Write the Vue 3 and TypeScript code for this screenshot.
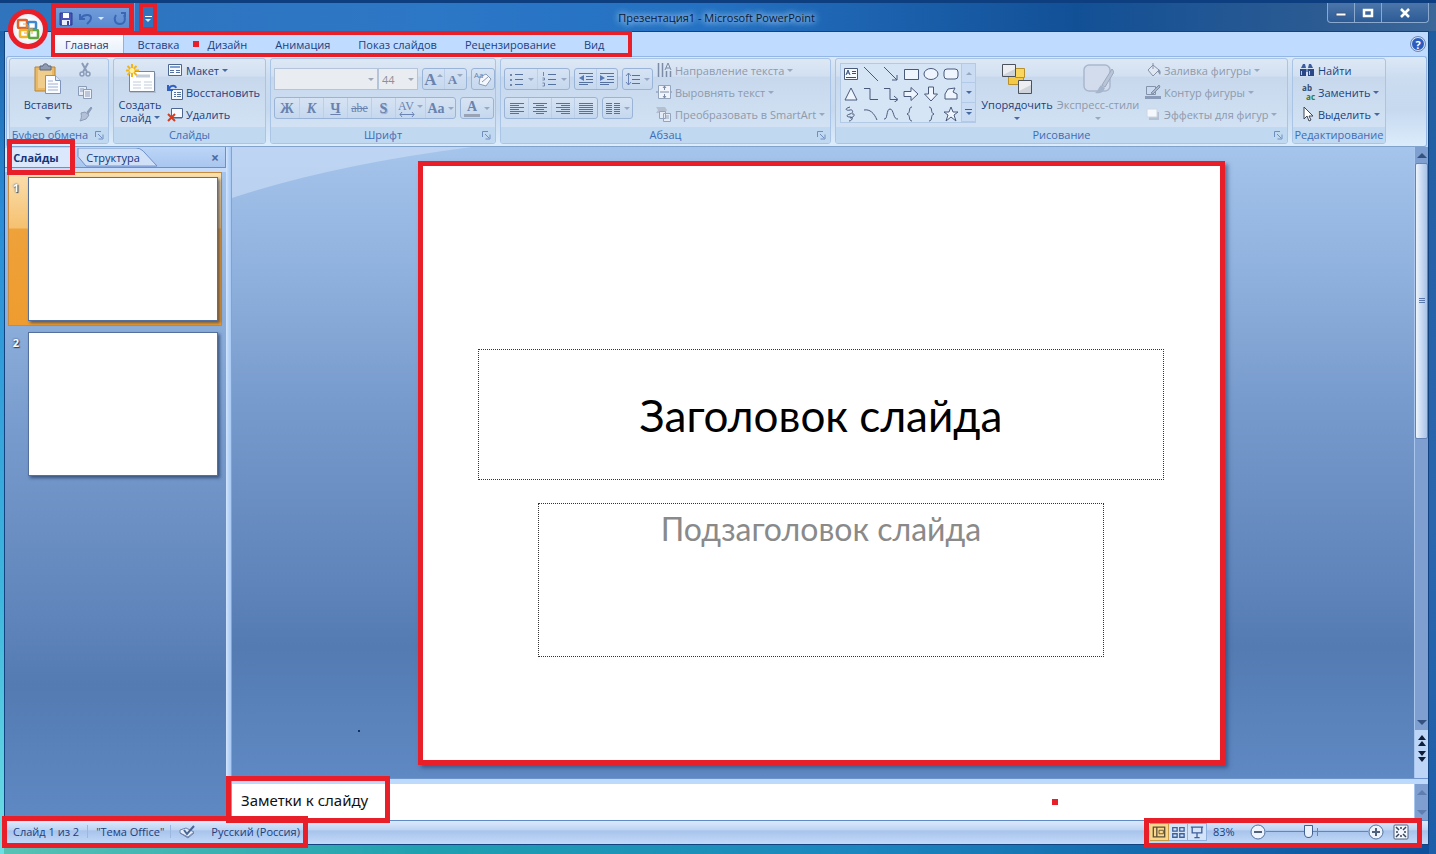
<script setup lang="ts">
import { ref } from 'vue'

const tabs = ['Главная', 'Вставка', 'Дизайн', 'Анимация', 'Показ слайдов', 'Рецензирование', 'Вид']
const activeTab = ref('Главная')
const activeSlide = ref(1)
const slides = [1, 2]
const zoom = ref(41)
const notes = ref('Заметки к слайду')

const g = '#8b9cb8'
const n = '#3d5f9a'
const lines = (rows: number[][], c = '#55719f') =>
  rows.map(([x, y, w]) => `<path d="M${x} ${y}.5h${w}" stroke="${c}"/>`).join('')

const icons: Record<string, string> = {
  save: '<path d="M2 2h12v12H2z" fill="#4a55b5" stroke="#2b3a90"/><path d="M5 2h6v5H5z" fill="#fff"/><path d="M4 9h8v5H4z" fill="#e8eefb"/><path d="M9 10h2v4H9z" fill="#3a46a0"/>',
  undo: '<path d="M2 3v5h5M3 7c3-4 10-4 10 0 0 3-2 4-4 6" fill="none" stroke="#3c66b5" stroke-width="2"/>',
  redo: '<path d="M9 2h4v4M4 4c-2 3-2 9 4 9 5 0 6-5 4-9" fill="none" stroke="#3c66b5" stroke-width="2"/>',
  cut: `<path d="M5 1l5 9M11 1L6 10" stroke="${g}" stroke-width="2"/><circle cx="5" cy="12" r="2" fill="none" stroke="${g}" stroke-width="1.5"/><circle cx="11" cy="12" r="2" fill="none" stroke="${g}" stroke-width="1.5"/>`,
  copy: `<path d="M1.500 2.500h8v9h-8z" fill="#e4ebf6" stroke="${g}"/><path d="M6.500 5.500h8v9h-8z" fill="#eef3fa" stroke="${g}"/><path d="M3 5h4M3 7h3M8 8h5M8 10h5M8 12h5" stroke="${g}"/>`,
  brush: `<path d="M10 6l4-5 1 1-4 6z" fill="${g}" stroke="${g}"/><path d="M4 7l4-1 4 3-3 4-6 2c1-2 2-4 1-8z" fill="#b3c0d6" stroke="${g}"/>`,
  layout: `<path d="M1.500 2.500h13v11h-13z" fill="#f5f9ff" stroke="#4d6790"/><path d="M3 4h10v2H3z" fill="#7fa0d0"/>` + lines([[3, 8, 4], [3, 10, 4], [9, 8, 4], [9, 10, 4]]),
  reset: `<path d="M4.500 5.500h11v10h-11z" fill="#f5f9ff" stroke="#4d6790"/>` + lines([[7, 8, 2], [10, 8, 4], [7, 10, 2], [10, 10, 4], [7, 12, 2], [10, 12, 4]]) + '<path d="M1 1v5h5M2 5c1-4 6-4 7-1" fill="none" stroke="#2f5fc0" stroke-width="2"/>',
  remove: '<path d="M4.500 2.500h11v9h-11z" fill="#f5f9ff" stroke="#4d6790"/><path d="M7 12h8" stroke="#4d6790"/><path d="M1 8l7 7M8 8l-7 7" stroke="#d93a1c" stroke-width="2"/>',
  paste: '<path d="M3 4h20v24H3z" fill="#e9b864" stroke="#b98436"/><path d="M6 7h14v18H6z" fill="#f1cd8b"/><path d="M8 3h3c0-3 5-3 5 0h3v4H8z" fill="#8f9bb0" stroke="#5c6880"/><path d="M13.500 12.500h10l5 5v13h-15z" fill="#fafcff" stroke="#7e94bb"/><path d="M23.500 12.500v5h5" fill="#dbe5f5" stroke="#7e94bb"/><path d="M16 18h5M16 21h10M16 24h10M16 27h10" stroke="#9db0d0"/>',
  newSlide: '<path d="M5.500 8.500h25v20h-25z" fill="#fdfeff" stroke="#76879f"/><path d="M6 29.500h26V10" fill="none" stroke="#b3bfd0"/><path d="M12 13h14" stroke="#c3ccda" stroke-width="3"/><path d="M9 19h8M9 22h8M9 25h8M20 19h8M20 22h8M20 25h8" stroke="#c3ccda"/><path d="M8 1v13M2 7.500h13M3.500 3l9 9M12.500 3l-9 9" stroke="#eeb51c" stroke-width="2"/><circle cx="8" cy="7.500" r="2.500" fill="#fff3a8"/>',
  bullets: '<path d="M2 3h2v2H2zM2 8h2v2H2zM2 13h2v2H2z" fill="#7187ae"/>' + lines([[7, 3, 8], [7, 8, 8], [7, 13, 8]]),
  numbers: '<path d="M2.500 1v4M1.500 7h2v2h-2M1.500 12h2v3h-2" fill="none" stroke="#7187ae"/>' + lines([[7, 3, 8], [7, 8, 8], [7, 13, 8]]),
  outdent: lines([[1, 2, 14], [8, 5, 7], [8, 8, 7], [1, 11, 14], [1, 13, 9]]) + '<path d="M6 4v6L1 7z" fill="#5678b5"/>',
  indent: lines([[1, 2, 14], [8, 5, 7], [8, 8, 7], [1, 11, 14], [1, 13, 9]]) + '<path d="M1 4v6l5-3z" fill="#5678b5"/>',
  spacing: lines([[7, 4, 8], [7, 8, 8], [7, 12, 8]]) + '<path d="M3.500 2v12M1 5l2.500-3L6 5M1 11l2.500 3L6 11" fill="none" stroke="#6a85b5"/>',
  left: lines([[1, 3, 14], [1, 5, 9], [1, 7, 14], [1, 9, 9], [1, 11, 14], [1, 13, 9]]),
  center: lines([[1, 3, 14], [4, 5, 8], [1, 7, 14], [4, 9, 8], [1, 11, 14], [4, 13, 8]]),
  right: lines([[1, 3, 14], [6, 5, 9], [1, 7, 14], [6, 9, 9], [1, 11, 14], [6, 13, 9]]),
  justify: lines([[1, 3, 14], [1, 5, 14], [1, 7, 14], [1, 9, 14], [1, 11, 14], [1, 13, 14]]),
  columns: lines([[1, 3, 6], [1, 5, 6], [1, 7, 6], [1, 9, 6], [1, 11, 6], [1, 13, 6], [9, 3, 6], [9, 5, 6], [9, 7, 6], [9, 9, 6], [9, 11, 6], [9, 13, 6]]),
  direction: '<path d="M2.500 1v14M6.500 1v14M10.500 9v6M14.500 9v6" stroke="#7b8ba6" stroke-width="1.500"/><path d="M9 8l3-7 3 7M10 6h4" fill="none" stroke="#7b8ba6"/>',
  vertical: '<path d="M2.500 1.500h12v13h-12z" fill="#f1f5fb" stroke="#94a4bd"/><path d="M8.500 2v4M8.500 10v4M7 4l1.500-2L10 4M7 12l1.500 2 1.500-2M4 8h9" stroke="#7b8ba6" fill="none"/><path d="M0 8h2M15 8h1" stroke="#7b8ba6"/>',
  smart: '<path d="M0 1h9l2 3-2 3H0l2-3z" fill="#b4bfd0"/><path d="M3.500 5.500h6v7h-6zM7.500 7.500h7v8h-7z" fill="#e6ecf5" stroke="#94a4bd"/><path d="M9 10h4M9 12h4" stroke="#94a4bd"/>',
  clear: '<path d="M7 8l6-3 5 5-5 7-7-2z" fill="#f4f7fc" stroke="#8a9bb8"/><path d="M9 13l6-5" stroke="#8a9bb8"/>',
  arrange: '<path d="M7.500 9.500h15v12h-15z" fill="#f5c945" stroke="#b9912a"/><path d="M14.500 5.500h9v9h-9z" fill="#f9d65e" stroke="#b9912a"/><path d="M1.500 1.500h13v12h-13z" fill="#cfd3da" stroke="#4c525c"/><path d="M17.500 17.500h13v13h-13z" fill="#cfd3da" stroke="#4c525c"/><path d="M2 2h12v4L2 12zM18 18h12v4l-12 6z" fill="#eceef2"/>',
  styles: '<rect x="2" y="2" width="26" height="26" rx="5" fill="#d3dced" stroke="#a9b7ce" stroke-width="1.500"/><path d="M30 6L20 22l3 2L32 9z" fill="#b9c4d6" stroke="#9aa9c0"/><path d="M19 22l4 3c-2 5-6 6-10 5 3-2 3-5 6-8z" fill="#a7b5cc"/>',
  fill: '<path d="M3 8l5-5 6 5-6 6z" fill="#e1e7f0" stroke="#8493ab"/><path d="M8 1v6" stroke="#8493ab"/><path d="M13 7c3 1 3 4 2 6l-2-3z" fill="#8493ab"/>',
  outline: '<path d="M1.500 2.500h9v8h-9z" fill="none" stroke="#8493ab"/><path d="M6 9l8-8 1 2-7 7z" fill="#aab6c9" stroke="#7d8da8"/><path d="M0 12h16v3H0z" fill="#8a9bb9"/>',
  effects: '<path d="M4 6h10v8H4z" fill="#b5c0d2"/><path d="M2 3h10v8H2z" fill="#f4f7fb" stroke="#cdd6e3"/>',
  find: '<path d="M2 6l2-4h2l1 4zM9 6l1-4h2l2 4z" fill="#3d5c9c"/><path d="M1 7h6v7H1zM9 7h6v7H9z" fill="#2b4786"/><path d="M7 7h2v3H7z" fill="#6c88c0"/><path d="M2.500 9v4M10.500 9v4" stroke="#b9cbee"/>',
  select: '<path d="M5 1v12l3-3 2 5 2-1-2-4h4z" fill="#fff" stroke="#3c4658"/>',
  spell: '<path d="M1 6l6-2 8 4-6 5-8-4z" fill="#e5edf8" stroke="#6c84ad"/><path d="M1 9l8 5 6-5" fill="none" stroke="#6c84ad"/><path d="M5 6l3 4 7-8" fill="none" stroke="#4a6596" stroke-width="2"/>',
  normal: '<path d="M1.500 2.500h13v11h-13zM5.500 3v10" fill="none" stroke="#5b5034" stroke-width="1.500"/><path d="M8 6h5v4H8z" fill="none" stroke="#5b5034"/>',
  sorter: `<path d="M2 3h5v4H2zM10 3h5v4h-5zM2 10h5v4H2zM10 10h5v4h-5z" fill="none" stroke="${n}" stroke-width="1.500"/>`,
  show: `<path d="M1 2.500h14M2.500 3v6h11V3M8 9v5M5 14.500h6" fill="none" stroke="${n}" stroke-width="1.500"/>`,
  fit: '<rect x="1" y="1" width="14" height="14" rx="1" fill="#f4f8fe" stroke="#50617c"/><path d="M3 3l3 3M13 3l-3 3M3 13l3-3M13 13l-3-3M8 3v2M8 11v2M3 8h2M11 8h2" stroke="#34445f" stroke-width="1.500"/>',
  launcher: '<path d="M1.500 7V1.500H7M9 4.500V9H4.500M4 4l4 4" fill="none" stroke="#6f8fbf"/>',
}

const s = (d: string, fill = 'none') => `<path d="${d}" fill="${fill}" stroke="#48597a"/>`
const shapes = [
  s('M1.500 2.500h13v11h-13z', '#f7faff') + '<path d="M3 9l2-5 2 5M4 7h2M9 5.500h4M9 7.500h4M3 11.500h10" fill="none" stroke="#35507f"/>',
  s('M1 1l14 14'),
  s('M1 1l13 13M14 9v5H9'),
  s('M1.500 3.500h14v10h-14z', '#eef5ff'),
  '<ellipse cx="8" cy="8" rx="7" ry="5.500" fill="#eef5ff" stroke="#48597a"/>',
  '<rect x="1" y="3" width="14" height="10" rx="3" fill="#eef5ff" stroke="#48597a"/>',
  s('M8 2l6 12H2z', '#eef5ff'),
  s('M1 2.500h6v11h8'),
  s('M1 2.500h6v11h7M11 10l4 3.500-4 3'),
  s('M1 5.500h7v-4l7 6.500-7 6.500v-4H1z', '#eef5ff'),
  s('M5.500 1h5v7h4L8 15 1.500 8h4z', '#eef5ff'),
  s('M2 13V8l3-5 7-1-2 4 4 2v5z', '#eef5ff'),
  s('M7 1c-7 2-3 4 0 3s4 3 0 4-4 3 0 3 2 4-1 4M9 8c4-1 2 4-2 4'),
  s('M1 4c6-1 10 3 13 10'),
  s('M1 13C5 14 3 3 7 3s3 11 8 10'),
  s('M9 1C5 1 8 7 4 8c4 1 1 7 5 7'),
  s('M6 1c4 0 1 6 5 7-4 1-1 7-5 7'),
  s('M8 1l2 5h5l-4 3 2 6-5-4-5 4 2-6-4-3h5z', '#eef5ff'),
]
</script>

<template>
  <div class="window">
    <header class="titlebar">
      <div class="qat">
        <button aria-label="Сохранить"><svg class="i16" viewBox="0 0 16 16" v-html="icons.save" /></button>
        <button aria-label="Отменить"><svg class="i16" viewBox="0 0 16 16" v-html="icons.undo" /></button>
        <i class="caret light" />
        <button class="redo" aria-label="Вернуть"><svg class="i16" viewBox="0 0 16 16" v-html="icons.redo" /></button>
        <span class="mark" />
      </div>
      <button class="customize" aria-label="Настройка панели"><i class="bar" /><i class="caret light" /><span class="mark" /></button>
      <div class="title">Презентация1 - Microsoft PowerPoint</div>
      <div class="winbtns">
        <button aria-label="Свернуть"><svg width="12" height="10" viewBox="0 0 12 10"><path d="M1 5h10v3H1z" fill="#fff" stroke="#44597c" /></svg></button>
        <button aria-label="Развернуть"><svg width="12" height="10" viewBox="0 0 12 10"><path d="M2 2h8v6H2z" fill="none" stroke="#fff" stroke-width="2.500" /></svg></button>
        <button class="close" aria-label="Закрыть"><svg width="12" height="10" viewBox="0 0 12 10"><path d="M2 1l8 8M10 1L2 9" stroke="#fff" stroke-width="2.500" /></svg></button>
      </div>
      <button class="office" aria-label="Office">
        <svg width="26" height="26" viewBox="0 0 26 26" fill="none" stroke-width="2.500">
          <rect x="3" y="4" width="9" height="8" rx="1" stroke="#e2622a" />
          <rect x="13" y="6" width="8" height="7" rx="1" stroke="#3e86d0" />
          <rect x="5" y="14" width="8" height="7" rx="1" stroke="#efb52c" />
          <rect x="14" y="14" width="9" height="8" rx="1" stroke="#5fa83a" />
          <path d="M8 8h4v4M14 9v4h4M9 17h4v-4M17 18v-4h-3" stroke="#f0a340" stroke-width="1" />
        </svg>
      </button>
    </header>

    <div class="client">
      <nav class="tabs">
        <div class="tablist">
          <button v-for="t in tabs" :key="t" :class="{ active: t === activeTab }" @click="activeTab = t">{{ t }}</button>
          <span class="mark" />
          <span class="dot" />
        </div>
        <button class="help" aria-label="Справка">?</button>
      </nav>

      <div class="ribbon">
        <section class="group clip">
          <div class="body">
            <button class="big"><svg class="i32" viewBox="0 0 32 32" v-html="icons.paste" /><span>Вставить</span><i class="caret" /></button>
            <div class="col">
              <button v-for="k in ['cut', 'copy', 'brush']" :key="k" class="row" :aria-label="k"><svg class="i16" viewBox="0 0 16 16" v-html="icons[k]" /></button>
            </div>
          </div>
          <footer>Буфер обмена<svg class="launch" viewBox="0 0 10 10" v-html="icons.launcher" /></footer>
        </section>

        <section class="group slidesg">
          <div class="body">
            <button class="big"><svg class="i32" viewBox="0 0 32 32" v-html="icons.newSlide" /><span>Создать</span><span class="inline">слайд<i class="caret" /></span></button>
            <div class="col">
              <button class="row"><svg class="i16" viewBox="0 0 16 16" v-html="icons.layout" />Макет<i class="caret" /></button>
              <button class="row"><svg class="i16" viewBox="0 0 16 16" v-html="icons.reset" />Восстановить</button>
              <button class="row"><svg class="i16" viewBox="0 0 16 16" v-html="icons.remove" />Удалить</button>
            </div>
          </div>
          <footer>Слайды</footer>
        </section>

        <section class="group fontg">
          <div class="body rows">
            <div class="line">
              <div class="combo">
                <label class="sel name"><select aria-label="Шрифт" disabled><option></option></select><i class="caret" /></label>
                <label class="sel size"><select aria-label="Размер" disabled><option>44</option></select><i class="caret" /></label>
              </div>
              <div class="box grow">
                <button aria-label="Увеличить"><b class="serif lg">A</b><i class="caret up dim" /></button>
                <button aria-label="Уменьшить"><b class="serif">A</b><i class="caret raised dim" /></button>
              </div>
              <div class="box one"><button aria-label="Очистить"><span class="tiny">Aa</span><svg class="i20" viewBox="0 0 20 20" v-html="icons.clear" /></button></div>
            </div>
            <div class="line">
              <div class="box">
                <button class="w24 serif b">Ж</button>
                <button class="w24 serif b it">К</button>
                <button class="w24 serif b un">Ч</button>
                <button class="w24 serif st">abe</button>
                <button class="w24 serif b sh">S</button>
                <button class="w30 serif av"><span>AV</span><svg width="16" height="5" viewBox="0 0 16 5"><path d="M1 2.500h14M3 0L1 2.500 3 5M13 0l2 2.500L13 5" fill="none" stroke="#6a85b5" /></svg><i class="caret dim" /></button>
                <button class="w30 serif b">Aa<i class="caret dim" /></button>
              </div>
              <div class="box"><button class="w32 serif b"><span class="fc">A</span><i class="caret dim" /></button></div>
            </div>
          </div>
          <footer>Шрифт<svg class="launch" viewBox="0 0 10 10" v-html="icons.launcher" /></footer>
        </section>

        <section class="group parag">
          <div class="body">
            <div class="rows">
              <div class="line">
                <div class="box">
                  <button class="w32" aria-label="Маркеры"><svg class="i16" viewBox="0 0 16 16" v-html="icons.bullets" /><i class="caret dim" /></button>
                  <button class="w32" aria-label="Нумерация"><svg class="i16" viewBox="0 0 16 16" v-html="icons.numbers" /><i class="caret dim" /></button>
                </div>
                <div class="box">
                  <button v-for="k in ['outdent', 'indent']" :key="k" class="w22" :aria-label="k"><svg class="i16" viewBox="0 0 16 16" v-html="icons[k]" /></button>
                </div>
                <div class="box"><button class="w28" aria-label="Интервал"><svg class="i16" viewBox="0 0 16 16" v-html="icons.spacing" /><i class="caret dim" /></button></div>
              </div>
              <div class="line">
                <div class="box">
                  <button v-for="k in ['left', 'center', 'right', 'justify']" :key="k" class="w23" :aria-label="k"><svg class="i16" viewBox="0 0 16 16" v-html="icons[k]" /></button>
                </div>
                <div class="box"><button class="w28" aria-label="Колонки"><svg class="i16" viewBox="0 0 16 16" v-html="icons.columns" /><i class="caret dim" /></button></div>
              </div>
            </div>
            <div class="col off">
              <button class="row"><svg class="i16" viewBox="0 0 16 16" v-html="icons.direction" />Направление текста<i class="caret dim" /></button>
              <button class="row"><svg class="i16" viewBox="0 0 16 16" v-html="icons.vertical" />Выровнять текст<i class="caret dim" /></button>
              <button class="row"><svg class="i16" viewBox="0 0 16 16" v-html="icons.smart" />Преобразовать в SmartArt<i class="caret dim" /></button>
            </div>
          </div>
          <footer>Абзац<svg class="launch" viewBox="0 0 10 10" v-html="icons.launcher" /></footer>
        </section>

        <section class="group drawg">
          <div class="body">
            <div class="gallery">
              <div class="shapes">
                <button v-for="(d, i) in shapes" :key="i" :aria-label="'Фигура ' + (i + 1)"><svg class="i16" viewBox="0 0 16 16" v-html="d" /></button>
              </div>
              <div class="gscroll">
                <button aria-label="Вверх"><i class="caret flip dim" /></button>
                <button aria-label="Вниз"><i class="caret" /></button>
                <button aria-label="Ещё"><i class="bar dark" /><i class="caret" /></button>
              </div>
            </div>
            <button class="big arr"><svg class="i32" viewBox="0 0 32 32" v-html="icons.arrange" /><span>Упорядочить</span><i class="caret" /></button>
            <button class="big off exp"><svg class="i32" viewBox="0 0 32 32" v-html="icons.styles" /><span>Экспресс-стили</span><i class="caret dim" /></button>
            <div class="col off">
              <button class="row"><svg class="i16" viewBox="0 0 16 16" v-html="icons.fill" />Заливка фигуры<i class="caret dim" /></button>
              <button class="row"><svg class="i16" viewBox="0 0 16 16" v-html="icons.outline" />Контур фигуры<i class="caret dim" /></button>
              <button class="row"><svg class="i16" viewBox="0 0 16 16" v-html="icons.effects" />Эффекты для фигур<i class="caret dim" /></button>
            </div>
          </div>
          <footer>Рисование<svg class="launch" viewBox="0 0 10 10" v-html="icons.launcher" /></footer>
        </section>

        <section class="group editg">
          <div class="body">
            <div class="col">
              <button class="row"><svg class="i16" viewBox="0 0 16 16" v-html="icons.find" />Найти</button>
              <button class="row"><span class="abac"><b>ab</b><b class="ac">ac</b></span>Заменить<i class="caret" /></button>
              <button class="row"><svg class="i16" viewBox="0 0 16 16" v-html="icons.select" />Выделить<i class="caret" /></button>
            </div>
          </div>
          <footer>Редактирование</footer>
        </section>
      </div>

      <main class="work">
        <aside class="pane">
          <div class="ptabs">
            <button class="ptab on">Слайды<span class="mark" /></button>
            <button class="ptab two">
              <svg class="slant" viewBox="0 0 82 20" preserveAspectRatio="none"><path d="M1 0v9l8 10h71L66 3q-3-3-7-3z" fill="#cfe0f7" stroke="#6d8fc4" /></svg>
              <span>Структура</span>
            </button>
            <button class="pclose" aria-label="Закрыть панель">×</button>
          </div>
          <div class="list">
            <button v-for="k in slides" :key="k" class="item" :class="{ sel: k === activeSlide }" @click="activeSlide = k">
              <span class="num">{{ k }}</span><span class="thumb" />
            </button>
          </div>
        </aside>
        <div class="split" />
        <div class="right">
          <div class="stagerow">
            <div class="stage">
              <svg class="sheen" viewBox="0 0 240 51" preserveAspectRatio="none"><path d="M0 0h240Q100 18 0 51z" fill="#cfdff6" fill-opacity=".6" /></svg>
              <article class="slide">
                <div class="ph head"><h1>Заголовок слайда</h1></div>
                <div class="ph sub"><p>Подзаголовок слайда</p></div>
              </article>
              <span class="speck" />
            </div>
            <div class="vscroll">
              <button aria-label="Вверх"><i class="tri up" /></button>
              <div class="track"><div class="grab"><i /><i /><i /></div></div>
              <button aria-label="Вниз"><i class="tri" /></button>
              <div class="pager">
                <button aria-label="Предыдущий слайд"><i class="tri up dk" /><i class="tri up dk" /></button>
                <button aria-label="Следующий слайд"><i class="tri dk" /><i class="tri dk" /></button>
              </div>
            </div>
          </div>
          <div class="notes">
            <textarea v-model="notes" aria-label="Заметки" spellcheck="false" />
            <div class="vscroll"><button aria-label="Вверх"><i class="tri up faint" /></button><button aria-label="Вниз"><i class="tri faint" /></button></div>
            <span class="mark" />
            <span class="dot" />
          </div>
        </div>
      </main>

      <footer class="status">
        <div class="sleft">
          <span class="s1">Слайд 1 из 2</span>
          <span class="s2">"Тема Office"</span>
          <span class="s3"><svg class="i16" viewBox="0 0 16 16" v-html="icons.spell" /></span>
          <span>Русский (Россия)</span>
          <span class="mark" />
        </div>
        <div class="sright">
          <div class="views">
            <button v-for="k in ['normal', 'sorter', 'show']" :key="k" :class="{ on: k === 'normal' }" :aria-label="k"><svg width="14" height="14" viewBox="0 0 16 16" v-html="icons[k]" /></button>
          </div>
          <span class="pct">83%</span>
          <button class="round" aria-label="Уменьшить масштаб"><svg width="16" height="16" viewBox="0 0 16 16"><circle cx="8" cy="8" r="7" fill="#eef4fd" stroke="#51719f" /><path d="M4 8h8" stroke="#51607c" stroke-width="2" /></svg></button>
          <input v-model="zoom" type="range" min="0" max="100" aria-label="Масштаб">
          <button class="round" aria-label="Увеличить масштаб"><svg width="16" height="16" viewBox="0 0 16 16"><circle cx="8" cy="8" r="7" fill="#eef4fd" stroke="#51719f" /><path d="M4 8h8M8 4v8" stroke="#51607c" stroke-width="2" /></svg></button>
          <button class="round fit" aria-label="Вписать"><svg width="16" height="16" viewBox="0 0 16 16" v-html="icons.fit" /></button>
          <span class="mark" />
        </div>
      </footer>
    </div>
  </div>
</template>

<style>
body { margin: 0; }
</style>

<style scoped>
* { box-sizing: border-box; }
button { font: inherit; color: inherit; background: none; border: 0; padding: 0; margin: 0; display: flex; align-items: center; justify-content: center; white-space: nowrap; }
.window {
  height: 100vh; min-height: 600px; display: flex; flex-direction: column; overflow: hidden;
  font: 11px/13px "Open Sans", "Noto Sans", sans-serif; color: #1c3f7e;
  padding: 0 7px 9px 4px;
  background:
    linear-gradient(#0d3f80 0, #0d3f80 3px, transparent 3px),
    linear-gradient(90deg, #2f74bd 0, #2c77c6 30%, #2470c2 50%, #125096 75%, #2c5b92 92%, #3c6799 100%) 0 0 / 100% 31px no-repeat,
    linear-gradient(#1f5c9f, #2b66ad 60%, #1d5ea8) 100% 0 / 7px 100% no-repeat,
    linear-gradient(#1d5ea5, #2a8dd6 25%, #3fb6dd 70%, #6fe0e4) 0 0 / 4px 100% no-repeat,
    linear-gradient(90deg, #58c2b4 0, #1fa0b0 30%, #1b86bf 60%, #0d4f9c 100%) 0 100% / 100% 9px no-repeat;
}
.mark { position: absolute; border: 5px solid #e81e29; pointer-events: none; z-index: 5; }
.dot { position: absolute; width: 6px; height: 6px; background: #e81e29; pointer-events: none; z-index: 5; }
.i16 { width: 16px; height: 16px; flex: none; }
.i20 { width: 20px; height: 20px; flex: none; }
.i32 { width: 32px; height: 32px; flex: none; }

.titlebar { position: relative; height: 31px; flex: none; display: flex; align-items: center; z-index: 3; padding: 3px 0 0 47px; }
.qat { position: relative; display: flex; align-items: center; height: 28px; width: 84px; padding: 3px 0 0 7px; gap: 4px; background: linear-gradient(#78a0dc, #5588cf); }
.qat .redo { margin-left: 4px; }
.qat .mark { inset: 0 1px -2px 0; }
.customize { position: relative; flex-direction: column; gap: 2px; width: 18px; height: 28px; margin-left: 4px; padding-top: 3px; background: #2f74bd; }
.customize .mark { inset: 0; border-width: 4px; }
.bar { width: 7px; height: 1px; background: #fff; }
.bar.dark { background: #3d5f9a; }
.title { position: absolute; left: 0; right: 0; padding-top: 2px; text-align: center; font-size: 11px; line-height: 16px; color: #0a1a33; text-shadow: 0 0 6px #a9cdf5, 0 0 6px #a9cdf5, 0 0 10px #8fbdf0; pointer-events: none; }
.winbtns { margin-left: auto; align-self: flex-start; display: flex; height: 20px; border: 1px solid #8ba9cf; border-top: 0; border-radius: 0 0 4px 4px; background: linear-gradient(#4c76ab, #2d5b96); }
.winbtns button { width: 27px; border-right: 1px solid #8ba9cf; }
.winbtns .close { width: 46px; border: 0; }
.office { position: absolute; left: 4px; top: 9px; width: 40px; height: 40px; border-radius: 50%; border: 5px solid #e81e29; background: radial-gradient(#fff 40%, #d5dfee); }

.client { flex: 1; min-height: 0; display: flex; flex-direction: column; border: 1px solid #10437f; background: #bfdbff; }
.tabs { flex: none; height: 24px; display: flex; justify-content: space-between; align-items: center; padding: 0 3px 0 46px; }
.tablist { position: relative; display: flex; height: 100%; }
.tablist button { padding: 0 14px; }
.tablist button:last-of-type { padding-right: 28px; }
.tablist .active { background: linear-gradient(#fff, #e4eefb); border-right: 1px solid #8fb1e0; }
.tablist .mark { inset: -1px 0 -1px 0; border-width: 4px; }
.tablist .dot { left: 142px; top: 9px; }
.help { width: 14px; height: 14px; border-radius: 50%; background: #2d5cc0; border: 1px solid #dbe8fa; outline: 1px solid #6d86b2; color: #fff; font-weight: 700; line-height: 11px; }

.ribbon { flex: none; display: flex; gap: 4px; height: 91px; margin: 0 1px; padding: 1px 2px 2px; overflow: hidden; border: 1px solid #94b6e4; border-bottom-color: #7fa3cb; border-radius: 3px; background: linear-gradient(#dce8f6, #cbdcf0 25%, #c6d9ef 60%, #dcecfc); }
.group { flex: none; display: flex; flex-direction: column; height: 86px; border: 1px solid #a9c4e4; border-radius: 3px; background: linear-gradient(#dde8f5, #d2e0f1 20%, #c7d8ed 22%, #d5e5f6); overflow: hidden; }
.clip { width: 100px; } .slidesg { width: 153px; } .fontg { width: 226px; } .parag { width: 331px; } .drawg { width: 453px; } .editg { width: 94px; }
.group .body { flex: 1; display: flex; }
.group footer { position: relative; flex: none; height: 16px; line-height: 15px; text-align: center; color: #3e6db5; background: #c1d8f1; white-space: nowrap; }
.launch { position: absolute; right: 4px; top: 3px; width: 10px; height: 10px; }
.clip footer { padding-right: 18px; }
.col { display: flex; flex-direction: column; }
.row { height: 22px; justify-content: flex-start; gap: 3px; }
.off { color: #8e99ab; }
.big { flex-direction: column; justify-content: flex-start; padding-top: 4px; height: 66px; }
.big span { line-height: 13px; }
.big > .caret { margin-top: 6px; }
.big .i32 { margin-bottom: 3px; }
.inline { display: flex; align-items: center; gap: 3px; }
.clip .big { width: 58px; margin-left: 9px; }
.slidesg .big { width: 48px; margin: 0 3px 0 2px; }
.caret { flex: none; width: 0; height: 0; border: 3px solid transparent; border-top-color: #4668a3; border-bottom: 0; }
.caret.light { border-top-color: #dbe8fa; }
.caret.dim { border-top-color: #98a8c2; }
.caret.up { transform: rotate(180deg); margin: 0 0 8px; }
.caret.raised { margin-bottom: 8px; }
.caret.flip { transform: rotate(180deg); }

.rows { display: flex; flex-direction: column; gap: 7px; padding: 9px 0 0 3px; }
.group .body.rows { flex-direction: column; }
.line { display: flex; gap: 4px; height: 22px; }
.combo { display: flex; width: 144px; }
.sel { position: relative; display: flex; align-items: center; }
.sel select { width: 100%; height: 22px; appearance: none; border: 1px solid #b4c4da; background: #e9edf2; color: #8b919b; font: inherit; padding: 0 3px; opacity: 1; border-radius: 0; }
.sel .caret { position: absolute; right: 4px; border-top-color: #9fa8b6; }
.name { width: 104px; }
.size { width: 40px; }
.box { display: flex; border: 1px solid #9ab4d8; border-radius: 3px; background: linear-gradient(#d6e3f4, #c6d8ee); color: #6a83ae; }
.box button + button { border-left: 1px solid #bccfe8; }
.grow { width: 45px; } .grow button { flex: 1; }
.one { width: 24px; } .one button { width: 22px; position: relative; }
.tiny { position: absolute; left: 2px; top: 1px; font-size: 8px; line-height: 10px; }
.serif { font-family: "Liberation Serif", serif; font-size: 13px; }
.lg { font-size: 17px; }
.b { font-weight: 700; font-size: 14px; }
.it { font-style: italic; }
.un { text-decoration: underline; }
.st { text-decoration: line-through; font-size: 12px; }
.sh { text-shadow: 1px 1px 1px #8ea6cc; }
.w22 { width: 21px; } .w23 { width: 23px; } .w24 { width: 24px; } .w28 { width: 29px; gap: 3px; } .w30 { width: 30px; gap: 3px; } .w32 { width: 32px; gap: 4px; }
.av { position: relative; font-size: 12px; padding-bottom: 4px; }
.av svg { position: absolute; left: 3px; bottom: 1px; }
.fc { border-bottom: 3px solid #98a3b5; width: 16px; line-height: 14px; }
.parag .off { margin-left: 3px; }

.gallery { display: flex; width: 136px; height: 60px; margin: 4px 0 0 4px; border: 1px solid #b3cae6; background: #d6e5f6; }
.shapes { display: grid; grid-template-columns: repeat(6, 20px); grid-template-rows: repeat(3, 20px); width: 121px; }
.gscroll { width: 14px; display: flex; flex-direction: column; border-left: 1px solid #b3cae6; }
.gscroll button { flex: 1; flex-direction: column; gap: 2px; border-bottom: 1px solid #b3cae6; background: #c9dcf3; }
.arr { width: 76px; margin-left: 3px; }
.exp { width: 86px; }
.drawg .col { margin-left: 4px; }
.editg .col { margin-left: 6px; }
.abac { display: flex; flex-direction: column; width: 16px; font-size: 8px; line-height: 10px; color: #3a4a66; }
.abac .ac { align-self: flex-end; color: #2e7d32; }
.abac b { line-height: 9px; }

.work { flex: 1; min-height: 0; display: flex; }
.pane { width: 221px; flex: none; display: flex; flex-direction: column; }
.ptabs { flex: none; display: flex; height: 21px; padding-top: 1px; border-bottom: 1px solid #6d8fc4; border-right: 1px solid #6d8fc4; background: linear-gradient(#bcd5f7, #a9c6ef); color: #15357a; }
.ptab { position: relative; }
.ptab.on { width: 68px; padding-right: 6px; font-weight: 700; background: #dbe8fb; }
.ptab.on .mark { inset: -9px -2px -8px 2px; }
.ptab.two { width: 82px; margin-left: 4px; padding-right: 10px; }
.ptab span { position: relative; }
.ptab .mark { position: absolute; }
.slant { position: absolute; inset: 0; width: 100%; height: 100%; }
.pclose { margin-left: auto; width: 20px; font-size: 14px; font-weight: 700; color: #4a6ba6; }
.list { flex: 1; display: flex; flex-direction: column; gap: 1px; padding: 0 4px 0 3px; border-top: 4px solid #c6dcfa; background: linear-gradient(#a6c5ec, #8fb1dd 20%, #779bcd 40%, #6b8fc2 55%, #5f85bc 68%, #547bb2 79%, #5f89c3); }
.item { flex: none; align-items: flex-start; justify-content: flex-start; padding: 4px 3px; border: 1px solid transparent; height: 154px; }
.item.sel { background: linear-gradient(#fbdfae, #f5c171 36%, #eea23a 37%, #ee9c2f); border-color: #c98a3c; }
.num { width: 16px; margin-top: 4px; padding-right: 8px; color: #fff; font-weight: 700; text-shadow: 1px 1px 1px #20406f, 0 0 2px #20406f; }
.thumb { flex: 1; height: 100%; background: #fff; border: 1px solid #55709c; box-shadow: 2px 2px 3px rgb(20 40 80 / .6); }
.split { width: 6px; flex: none; background: linear-gradient(90deg, #d3e5fd, #b4d2f8 60%, #a9c9f3); border-right: 1px solid #7fa3d6; }
.right { flex: 1; min-width: 0; display: flex; flex-direction: column; }
.stagerow { flex: 1; min-height: 0; display: flex; }
.stage { position: relative; flex: 1; min-width: 0; display: flex; justify-content: center; padding: 14px 4px 14px 0; background: linear-gradient(#a6c5ec, #9fbfe8 5%, #8fb1dd 20%, #779bcd 40%, #6b8fc2 55%, #5f85bc 68%, #547bb2 79%, #5f89c3); }
.sheen { position: absolute; left: 0; top: 0; width: 240px; height: 51px; }
.slide { position: relative; height: 100%; aspect-ratio: 807 / 604; border: 5px solid #e81e29; background: #fff; box-shadow: 3px 3px 4px rgb(25 50 95 / .5); display: grid; grid-template-rows: 183fr 131fr 23fr 154fr 103fr; justify-items: center; }
.ph { border: 1px dotted #333; display: flex; justify-content: center; min-height: 0; }
.head { grid-row: 2; width: 86%; align-items: center; }
.sub { grid-row: 4; width: 71%; align-items: flex-start; padding-top: 5px; }
h1, p { margin: 0; font-family: Lato, Roboto, sans-serif; font-weight: 400; white-space: nowrap; }
h1 { font-size: 44px; line-height: 52px; color: #000; }
p { font-size: 32px; line-height: 40px; color: #8a8a8a; }
.speck { position: absolute; left: 126px; bottom: 47px; width: 2px; height: 2px; background: #16305e; }
.vscroll { width: 14px; flex: none; display: flex; flex-direction: column; background: #7f9fd0; border-left: 1px solid #a9c6ee; }
.vscroll button { height: 16px; flex: none; flex-direction: column; gap: 1px; }
.track { flex: 1; }
.grab { height: 50%; border: 1px solid #6484b8; border-radius: 2px; background: linear-gradient(90deg, #eef4fc, #c9daf2 50%, #a9c3e8); display: flex; flex-direction: column; align-items: center; justify-content: center; gap: 1px; }
.grab i { width: 6px; height: 1px; background: #5a78ac; }
.pager { height: 49px; flex: none; background: #bdd6f8; padding-top: 2px; }
.pager button { width: 100%; }
.tri { width: 0; height: 0; border: 5px solid transparent; border-top-color: #34517f; border-bottom: 0; }
.tri.up { transform: rotate(180deg); }
.tri.dk { border-top-color: #101d38; border-width: 5px 4px 0; }
.tri.faint { border-top-color: #5f7db0; }
.notes { position: relative; flex: none; display: flex; height: 41px; border-top: 5px solid #bdd9fb; box-shadow: 0 -1px 0 #6f94cb; }
.notes textarea { flex: 1; min-width: 0; resize: none; border: 0; outline: 0; background: #fff; padding: 6px 9px 0; font: 15px/20px "Noto Sans", sans-serif; color: #111; overflow: hidden; }
.notes .vscroll { justify-content: space-between; }
.notes .mark { left: -6px; width: 164px; top: -8px; height: 47px; }
.notes .dot { left: 820px; top: 15px; }

.status { flex: none; height: 24px; display: flex; justify-content: space-between; border-top: 1px solid #5f8ac6; background: linear-gradient(#dbe9fc, #bdd3f3 40%, #a7c3ec 42%, #c3daf9); color: #1c3f7e; }
.sleft { position: relative; display: flex; align-items: center; padding: 0 8px 2px; }
.sleft .mark { inset: -5px 0 -4px -3px; }
.s1 { padding-right: 8px; border-right: 1px solid #9bb7df; }
.s2 { padding: 0 6px 0 8px; border-right: 1px solid #9bb7df; }
.s3 { display: flex; padding: 0 16px 0 8px; }
.sright { position: relative; display: flex; align-items: center; margin-right: 6px; padding: 0 13px 2px 6px; }
.sright .mark { inset: -3px 0 -4px 0; }
.views { display: flex; }
.views button { width: 19px; height: 18px; border: 1px solid #8fb0de; border-left: 0; background: #d3e3f8; }
.views .on { background: #fbd78c; border-color: #c79a45; }
.pct { width: 30px; margin: 0 7px 0 6px; }
.round { width: 16px; }
.fit { margin-left: 9px; }
input[type=range] { width: 102px; height: 16px; margin: 0; appearance: none; background: linear-gradient(#6485b8, #6485b8) 50% 50% / 100% 1px no-repeat, linear-gradient(#6485b8, #6485b8) 50% 50% / 1px 8px no-repeat; }
input[type=range]::-webkit-slider-thumb { appearance: none; width: 9px; height: 13px; background: #eaf2fd; border: 1px solid #41608f; border-radius: 1px 1px 5px 5px; }
</style>
